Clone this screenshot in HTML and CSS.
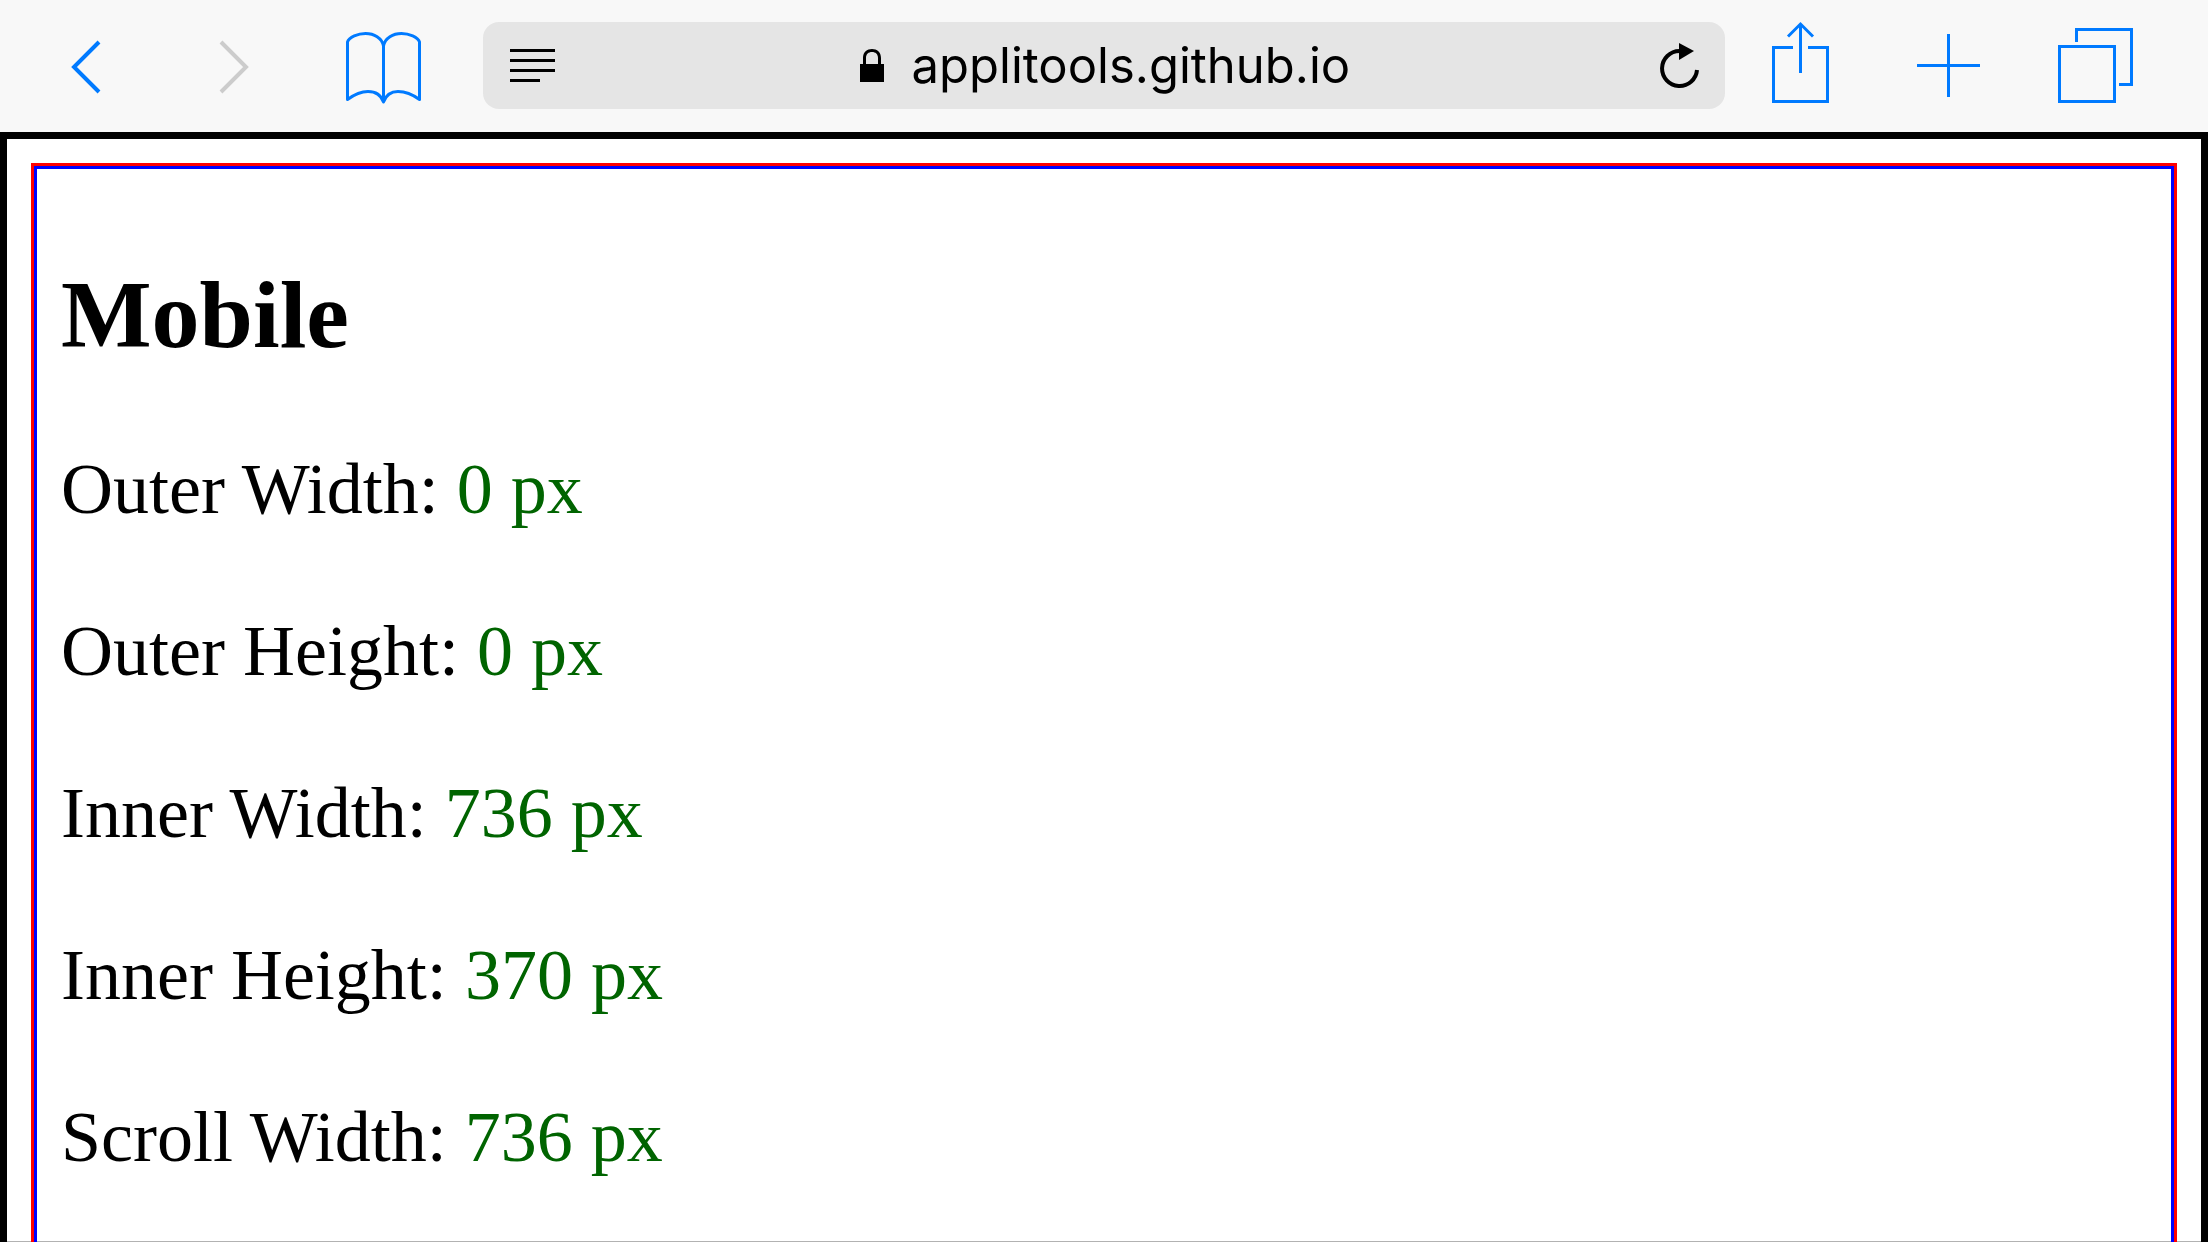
FILE: index.html
```html
<!DOCTYPE html>
<html lang="en">
<head>
<meta charset="utf-8">
<meta name="viewport" content="width=device-width, initial-scale=1">
<title>Mobile</title>
<link rel="stylesheet" href="styles.css">
</head>
<body>
<header class="toolbar">
  <nav class="tools" aria-label="History and bookmarks">
    <button class="tool" type="button" aria-label="Back">
      <svg viewBox="0 0 148 132"><path d="M87 42 62 67 87 92" stroke-width="4"/></svg>
    </button>
    <button class="tool" type="button" aria-label="Forward" disabled>
      <svg viewBox="0 0 148 132"><path d="M61 42 86 67 61 92" stroke-width="4"/></svg>
    </button>
    <button class="tool" type="button" aria-label="Bookmarks">
      <svg viewBox="0 0 148 132"><path d="M75.500 102V46C74 38 66 33.500 57.500 33.500C50 33.500 41 37 39.500 42V99.500C47 94 54 91.500 60 91.500C68 91.500 73 95 75.500 102C78 95 82 91.500 90 91.500C97 91.500 104 94 111.500 99.500V42C110 37 101 33.500 93.500 33.500C85 33.500 77 38 75.500 46" stroke-width="3" stroke-linejoin="round"/></svg>
    </button>
  </nav>
  <form class="address">
    <button class="address-button" type="button" aria-label="Reader view">
      <svg width="45" height="33" viewBox="0 0 45 33"><path d="M0 0H45V3H0ZM0 10H45V13H0ZM0 20H45V23H0ZM0 30H30V33H0Z"/></svg>
    </button>
    <div class="site">
      <svg width="24" height="33" viewBox="0 0 24 33"><path d="M0 15H3V9C3 3 7 0 12 0S21 3 21 9V15H24V33H0ZM6 15H18V9C18 5 15.500 3 12 3S6 5 6 9Z" fill-rule="evenodd"/></svg>
      <input class="url" type="text" aria-label="Address" value="applitools.github.io">
    </div>
    <button class="address-button" type="button" aria-label="Reload">
      <svg width="39" height="46" viewBox="0 0 39 46"><path d="M37 27A17.500 17.500 0 1 1 19.500 8" fill="none" stroke="#000" stroke-width="4"/><path d="M19 0 34 8 19 17Z"/></svg>
    </button>
  </form>
  <nav class="tools" aria-label="Page actions">
    <button class="tool" type="button" aria-label="Share">
      <svg viewBox="0 0 148 132"><path d="M67 47.500H47.500V101.500H101.500V47.500H82M74.500 73V24M62 36.500 74.500 24 87 36.500" stroke-width="3"/></svg>
    </button>
    <button class="tool" type="button" aria-label="New tab">
      <svg viewBox="0 0 148 132"><path d="M43 65.500H106M74.500 34V97" stroke-width="3"/></svg>
    </button>
    <button class="tool" type="button" aria-label="Tabs">
      <svg viewBox="0 0 148 132"><path d="M37.500 46.500H92.500V101.500H37.500ZM54.500 42V29.500H109.500V84.500H97" stroke-width="3"/></svg>
    </button>
  </nav>
</header>
<main class="page">
  <section class="panel">
    <div class="report">
      <h1>Mobile</h1>
      <p>Outer Width: <span class="value">0 px</span></p>
      <p>Outer Height: <span class="value">0 px</span></p>
      <p>Inner Width: <span class="value">736 px</span></p>
      <p>Inner Height: <span class="value">370 px</span></p>
      <p>Scroll Width: <span class="value">736 px</span></p>
    </div>
  </section>
</main>
</body>
</html>
```
FILE: styles.css
```css
* {
  box-sizing: border-box;
}

body {
  display: flex;
  flex-direction: column;
  height: 100vh;
  margin: 0;
  overflow: hidden;
  background: #fff;
  color: #000;
  font-family: "Liberation Serif", "Times New Roman", serif;
  font-size: 72px;
  line-height: 82px;
}

button {
  padding: 0;
  border: 0;
  background: none;
}

svg {
  display: block;
}

.toolbar {
  display: flex;
  flex: none;
  align-items: center;
  height: 132px;
  padding: 0 38px 0 12px;
  background: #f8f8f8;
}

.tools {
  display: flex;
  flex: none;
}

.tool {
  width: 148px;
  height: 132px;
  color: #007aff;
}

.tool:disabled {
  color: #ccc;
}

.tool svg {
  fill: none;
  stroke: currentColor;
}

.address {
  display: flex;
  flex: 1;
  align-items: center;
  justify-content: space-between;
  height: 87px;
  margin: 0 1px 1px 27px;
  padding: 0 26px 0 27px;
  border-radius: 16px;
  background: #e5e5e5;
}

.site {
  display: flex;
  align-items: center;
  gap: 28px;
}

.url {
  width: 444px;
  padding: 0;
  border: 0;
  background: none;
  color: #000;
  font: 49px/60px Inter, "Liberation Sans", sans-serif;
}

.page {
  flex: 1;
  min-height: 0;
  padding: 24px 24px 0;
  border: 7px solid #000;
  border-bottom: 0;
  box-shadow: inset 0 -1px #b2b2b2;
}

.panel {
  height: 100%;
  border: 3px solid #f00;
  border-bottom: 0;
}

.report {
  height: 100%;
  padding: 0 24px;
  border: 3px solid #00f;
  border-bottom: 0;
  box-shadow: inset 0 -1px #b2b2b2;
}

h1 {
  margin: 91px 0 78px;
  font-size: 96px;
  line-height: 110px;
}

p {
  margin: 0 0 80px;
}

.value {
  color: #006400;
}
```
